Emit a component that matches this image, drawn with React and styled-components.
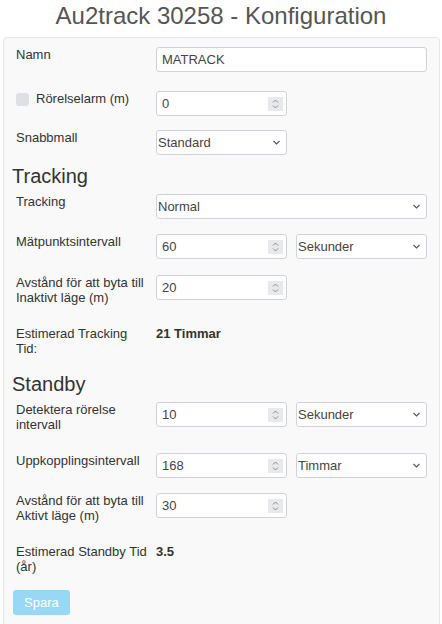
import React from 'react';
import styled, { createGlobalStyle } from 'styled-components';

const Global = createGlobalStyle`
    body {
        margin: 0;
        background: #fff;
        font-family: "Liberation Sans", Arial, sans-serif;
        color: #333;
    }
`;

const Page = styled.div`
    width: 442px;
`;

const Title = styled.h1`
    margin: 2px 0 7px;
    text-align: center;
    font-size: 24px;
    font-weight: 400;
    color: #555;
`;

const Panel = styled.div`
    margin: 0 2px 0 3px;
    background-color: #f9f9f9;
    border: 1px solid #e6e6e6;
    border-radius: 4px;
    padding: 9px 12px 20px 8px;
`;

const Heading = styled.h2`
    margin: 2px 0 6px;
    font-size: 20px;
    font-weight: 400;
    color: #333;
    line-height: 23px;
`;

const Row = styled.div`
    display: grid;
    grid-template-columns: 135px minmax(0, 1fr) minmax(0, 1fr);
    column-gap: 9px;
    align-items: start;
    margin-bottom: ${({ $mb }) => $mb ?? 15}px;
`;

const Label = styled.label`
    display: flex;
    align-items: flex-start;
    gap: 7px;
    padding: 0 0 6px 4px;
    font-size: 13px;
    line-height: 15px;
    color: #333;
`;

const Check = styled.span`
    flex: none;
    width: 13px;
    height: 13px;
    margin-top: 2px;
    border-radius: 3px;
    background-color: #dde1e6;
`;

const Field = styled.div`
    grid-column: ${({ $wide }) => ($wide ? 'span 2' : 'auto')};
    min-width: 0;
    display: flex;
    align-items: center;
    height: 25px;
    box-sizing: border-box;
    border: 1px solid #cfd2d8;
    border-radius: 3px;
    background-color: #fff;
    padding: 0 3px 0 5px;
`;

const Input = styled.input`
    flex: 1;
    width: 0;
    min-width: 0;
    border: none;
    outline: none;
    background: transparent;
    padding: 0;
    font-family: inherit;
    font-size: 13px;
    color: #444;
`;

const Spinner = styled.span`
    flex: none;
    width: 15px;
    height: 14px;
    background-color: #e8e9ed;
    display: flex;
    align-items: center;
    justify-content: center;
`;

const Select = styled.div`
    grid-column: ${({ $wide }) => ($wide ? 'span 2' : 'auto')};
    min-width: 0;
    display: flex;
    align-items: center;
    justify-content: space-between;
    height: 25px;
    box-sizing: border-box;
    border: 1px solid #cfd2d8;
    border-radius: 3px;
    background-color: #fff;
    padding: 0 6px 0 1px;
    font-size: 13px;
    color: #444;
`;

const Value = styled.div`
    font-size: 13px;
    line-height: 15px;
    font-weight: 700;
    color: #333;
`;

const Button = styled.button`
    margin-left: 1px;
    height: 25px;
    padding: 0 11px;
    border: none;
    border-radius: 3px;
    background-color: #98d8f6;
    color: #fff;
    font-family: inherit;
    font-size: 13px;
`;

const SpinIcon = () => (
    <Spinner>
        <svg width="7" height="10" viewBox="0 0 7 10">
            <path d="M1 3.5 L3.5 1 L6 3.5 M1 6.5 L3.5 9 L6 6.5" fill="none" stroke="#8c8c8c" strokeWidth="1" />
        </svg>
    </Spinner>
);

const Chevron = () => (
    <svg width="7" height="5" viewBox="0 0 7 5">
        <path d="M0.5 1 L3.5 4 L6.5 1" fill="none" stroke="#555" strokeWidth="1.1" />
    </svg>
);

const NumberField = ({ value, wide }) => (
    <Field $wide={wide}>
        <Input defaultValue={value} />
        {!wide && <SpinIcon />}
    </Field>
);

const Dropdown = ({ value, wide }) => (
    <Select $wide={wide}>
        <span>{value}</span>
        <Chevron />
    </Select>
);

const App = () => {
    return (
        <Page>
            <Global />
            <Title>Au2track 30258 - Konfiguration</Title>
            <Panel>
                <Row $mb={19}>
                    <Label>Namn</Label>
                    <NumberField value="MATRACK" wide />
                </Row>
                <Row $mb={14}>
                    <Label><Check />Rörelselarm (m)</Label>
                    <NumberField value="0" />
                </Row>
                <Row $mb={10}>
                    <Label>Snabbmall</Label>
                    <Dropdown value="Standard" />
                </Row>

                <Heading>Tracking</Heading>
                <Row>
                    <Label>Tracking</Label>
                    <Dropdown value="Normal" wide />
                </Row>
                <Row $mb={16}>
                    <Label>Mätpunktsintervall</Label>
                    <NumberField value="60" />
                    <Dropdown value="Sekunder" />
                </Row>
                <Row>
                    <Label>Avstånd för att byta till Inaktivt läge (m)</Label>
                    <NumberField value="20" />
                </Row>
                <Row $mb={11}>
                    <Label>Estimerad Tracking Tid:</Label>
                    <Value>21 Timmar</Value>
                </Row>

                <Heading>Standby</Heading>
                <Row>
                    <Label>Detektera rörelse intervall</Label>
                    <NumberField value="10" />
                    <Dropdown value="Sekunder" />
                </Row>
                <Row>
                    <Label>Uppkopplingsintervall</Label>
                    <NumberField value="168" />
                    <Dropdown value="Timmar" />
                </Row>
                <Row>
                    <Label>Avstånd för att byta till Aktivt läge (m)</Label>
                    <NumberField value="30" />
                </Row>
                <Row $mb={10}>
                    <Label>Estimerad Standby Tid (år)</Label>
                    <Value>3.5</Value>
                </Row>

                <Button>Spara</Button>
            </Panel>
        </Page>
    );
};

export default App;
